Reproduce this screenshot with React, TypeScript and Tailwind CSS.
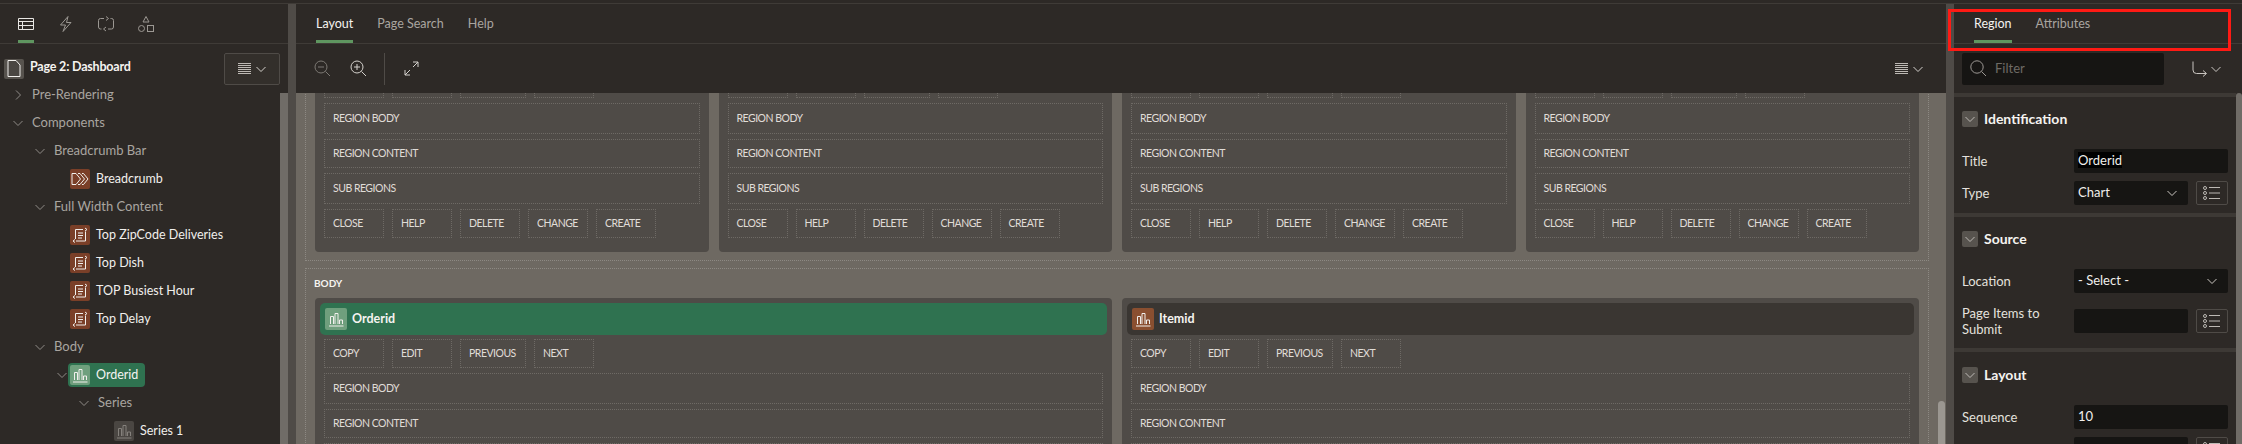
import React from "react";

const font = { fontFamily: '"Lato", "Noto Sans", sans-serif' };

function Chevron({ right = false, className = "" }: { right?: boolean; className?: string }) {
  return (
    <svg width="10" height="10" viewBox="0 0 10 10" fill="none" stroke="currentColor" strokeWidth="1" className={className}>
      {right ? <path d="M3 0.5 L7.5 5 L3 9.5" /> : <path d="M0.5 3 L5 7.5 L9.5 3" />}
    </svg>
  );
}

function MenuLines() {
  return (
    <svg width="13" height="12" viewBox="0 0 13 12" stroke="#bdb9b4" strokeWidth="1">
      <path d="M0 0.5H13M0 2.5H13M0 4.5H13M0 6.5H13M0 8.5H13M0 10.5H13" />
    </svg>
  );
}

function TabsIcons() {
  return (
    <div className="flex items-center gap-[24px] pl-[18px] pt-[12px] text-[#9c9893]">
      <div className="flex flex-col items-center">
        <svg width="16" height="16" viewBox="0 0 16 16" fill="none" stroke="#e8e6e3" strokeWidth="1">
          <path d="M0.5 2.5H15.5V13.5H0.5ZM0.5 5.5H15.5M0.5 9.5H15.5M4.5 5.5V13.5" />
        </svg>
        <div className="mt-[8px] h-[3px] w-[16px] bg-[#5f9660]" />
      </div>
      <div className="flex flex-col items-center">
        <svg width="16" height="16" viewBox="0 0 16 16" fill="none" stroke="currentColor" strokeWidth="1">
          <path d="M10 0.5 L2.5 9 H7.5 L5 15.5 L13 6.5 H8.5 Z" />
        </svg>
        <div className="mt-[8px] h-[3px]" />
      </div>
      <div className="flex flex-col items-center">
        <svg width="16" height="16" viewBox="0 0 16 16" fill="none" stroke="currentColor" strokeWidth="1">
          <path d="M6 2.5H2.5Q0.5 2.5 0.5 4.5V11Q0.5 13 2.5 13H3.5M10 13H13.5Q15.5 13 15.5 11V4.5Q15.5 2.5 13.5 2.5H12.5M8 0.5L10.5 2.5L8 4.5M8 11L5.5 13L8 15" />
        </svg>
        <div className="mt-[8px] h-[3px]" />
      </div>
      <div className="flex flex-col items-center">
        <svg width="16" height="16" viewBox="0 0 16 16" fill="none" stroke="currentColor" strokeWidth="1">
          <path d="M8 0.5L11 6H5Z" />
          <circle cx="3.5" cy="12.5" r="3" />
          <rect x="9.5" y="9.5" width="6" height="6" />
        </svg>
        <div className="mt-[8px] h-[3px]" />
      </div>
    </div>
  );
}

function BarsGlyph({ color = "#f1efec", size = 16 }: { color?: string; size?: number }) {
  return (
    <svg width={size} height={size} viewBox="0 0 16 16" fill="none" stroke={color} strokeWidth="1">
      <path d="M2.5 13V5.5H5.5V13M7 13V2.5H10V13M11.5 13V9H14.5V13M1 15H15.5" />
    </svg>
  );
}

function RegionGlyph() {
  return (
    <svg width="16" height="16" viewBox="0 0 16 16" fill="none" stroke="#f1efec" strokeWidth="1">
      <path d="M3.5 12V2.5H11M13 1L15 2.5L13 4M13.5 4.5V14H4M3 12.5L1 14L3 15.5M6 6H11M6 8.5H11M6 11H10" />
    </svg>
  );
}

function BreadcrumbGlyph() {
  return (
    <svg width="18" height="14" viewBox="0 0 18 14" fill="none" stroke="#f1efec" strokeWidth="1">
      <path d="M1 1.5H5L9.5 7L5 12.5H1ZM7 1.5H9L13.5 7L9 12.5H7M11 1.5H12.5L17 7L12.5 12.5H11" />
    </svg>
  );
}

function TreeRow({
  pl,
  chevron,
  children,
}: {
  pl: number;
  chevron?: "down" | "right";
  children: React.ReactNode;
}) {
  return (
    <div className="flex h-[28px] items-center" style={{ paddingLeft: pl }}>
      <div className="flex w-[22px] shrink-0 items-center pl-[3px] text-[#8f8b86]">
        {chevron && <Chevron right={chevron === "right"} />}
      </div>
      {children}
    </div>
  );
}

function Group({ pl, label, right = false }: { pl: number; label: string; right?: boolean }) {
  return (
    <TreeRow pl={pl} chevron={right ? "right" : "down"}>
      <span className="text-[13px] text-[#a9a5a0]">{label}</span>
    </TreeRow>
  );
}

function Leaf({
  pl,
  label,
  icon,
  bg = "bg-[#7a3f28]",
}: {
  pl: number;
  label: string;
  icon: React.ReactNode;
  bg?: string;
}) {
  return (
    <TreeRow pl={pl}>
      <span className={`flex h-[20px] w-[20px] items-center justify-center rounded-[2px] ${bg}`}>{icon}</span>
      <span className="ml-[6px] text-[12.5px] text-[#f1efec]">{label}</span>
    </TreeRow>
  );
}

function LeftPanel() {
  return (
    <div className="flex h-full w-[288px] shrink-0 flex-col bg-[#2d2926]">
      <div className="h-[40px] shrink-0 border-b border-[#3f3b37]">
        <TabsIcons />
      </div>
      <div className="flex min-h-0 flex-1">
        <div className="min-w-0 flex-1 overflow-hidden">
          <div className="flex h-[49px] items-center pl-[4px] pr-0">
            <span className="flex h-[20px] w-[20px] items-center justify-center rounded-[2px] bg-[#57534e]">
              <svg width="14" height="17" viewBox="0 0 14 17" fill="#4a4642" stroke="#f1efec" strokeWidth="1">
                <path d="M1 0.5H9L13 5V16.5H1Z" />
              </svg>
            </span>
            <span className="ml-[6px] flex-1 pb-[2px] text-[12.5px] font-bold tracking-[-0.2px] text-[#f5f3f0]">Page 2: Dashboard</span>
            <div className="flex h-[32px] w-[56px] items-center justify-center gap-[5px] rounded-[2px] border border-[#4f4b47] bg-[#332f2b] text-[#d4d1cc]">
              <MenuLines />
              <Chevron />
            </div>
          </div>
          <div className="-mt-[12px]">
            <Group pl={10} label="Pre-Rendering" right />
          </div>
          <Group pl={10} label="Components" />
          <Group pl={32} label="Breadcrumb Bar" />
          <Leaf pl={48} label="Breadcrumb" icon={<BreadcrumbGlyph />} />
          <Group pl={32} label="Full Width Content" />
          <Leaf pl={48} label="Top ZipCode Deliveries" icon={<RegionGlyph />} />
          <Leaf pl={48} label="Top Dish" icon={<RegionGlyph />} />
          <Leaf pl={48} label="TOP Busiest Hour" icon={<RegionGlyph />} />
          <Leaf pl={48} label="Top Delay" icon={<RegionGlyph />} />
          <Group pl={32} label="Body" />
          <TreeRow pl={54} chevron="down">
            <span className="-ml-[8px] flex h-[24px] w-[77px] items-center rounded-[4px] bg-[#2f7250] pl-[2px]">
              <span className="flex h-[20px] w-[20px] items-center justify-center rounded-[2px] bg-[#6f9f7d]">
                <BarsGlyph />
              </span>
              <span className="ml-[6px] text-[12.5px] text-[#f5f3f0]">Orderid</span>
            </span>
          </TreeRow>
          <Group pl={76} label="Series" />
          <Leaf pl={92} label="Series 1" icon={<BarsGlyph color="#85817c" />} bg="bg-[#4a4642]" />
        </div>
        <div className="mt-[49px] w-[8px] shrink-0 bg-[#706c67]" />
      </div>
    </div>
  );
}

function Splitter() {
  return <div className="h-full w-[8px] shrink-0 bg-[#4f4b47]" />;
}

function Slot({ label, wide = false }: { label?: string; wide?: boolean }) {
  return (
    <div
      className={`flex h-[29px] items-center border border-dotted border-[#6e6a65] px-[8px] text-[10.5px] tracking-[-0.5px] text-[#e0ddd8] ${
        wide ? "w-[66px]" : "w-[60px]"
      }`}
    >
      {label}
    </div>
  );
}

function ScrolledOffRow() {
  return (
    <div className="flex gap-[8px]">
      <Slot />
      <Slot />
      <Slot wide />
      <Slot />
    </div>
  );
}

function TopRow() {
  return (
    <div className="flex gap-[8px]">
      <Slot label="COPY" />
      <Slot label="EDIT" />
      <Slot label="PREVIOUS" wide />
      <Slot label="NEXT" />
    </div>
  );
}

function BottomRow() {
  return (
    <div className="flex gap-[8px]">
      {["CLOSE", "HELP", "DELETE", "CHANGE", "CREATE"].map((t) => (
        <Slot key={t} label={t} />
      ))}
    </div>
  );
}

function Wide({ label, h }: { label?: string; h: string }) {
  return (
    <div className={`flex items-center border border-dotted border-[#6e6a65] px-[8px] text-[10.5px] tracking-[-0.5px] text-[#e0ddd8] ${h}`}>
      {label}
    </div>
  );
}

function TopCard() {
  return (
    <div className="flex flex-col gap-[5px] rounded-[4px] bg-[#4f4b47] px-[9px] pb-[14px] pt-[15px]">
      <ScrolledOffRow />
      <Wide label="REGION BODY" h="h-[31px]" />
      <Wide label="REGION CONTENT" h="h-[29px]" />
      <Wide label="SUB REGIONS" h="h-[31px]" />
      <BottomRow />
    </div>
  );
}

function BodyCard({ title, active = false }: { title: string; active?: boolean }) {
  return (
    <div className="rounded-[4px] bg-[#4f4b47] px-[5px] pt-[5px]">
      <div className={`flex h-[32px] items-center rounded-[5px] pl-[5px] ${active ? "bg-[#2f7250]" : "bg-[#3a3632]"}`}>
        <span className={`flex h-[22px] w-[22px] items-center justify-center rounded-[2px] ${active ? "bg-[#6f9f7d]" : "bg-[#8a4f30]"}`}>
          <BarsGlyph />
        </span>
        <span className="ml-[5px] text-[12.5px] font-bold text-[#f5f3f0]">{title}</span>
      </div>
      <div className="flex flex-col gap-[5px] px-[4px] pt-[4px]">
        <TopRow />
        <Wide label="REGION BODY" h="h-[31px]" />
        <Wide label="REGION CONTENT" h="h-[29px]" />
        <Wide h="h-[31px]" />
      </div>
    </div>
  );
}

function Canvas() {
  return (
    <div className="flex min-h-0 flex-1 overflow-hidden bg-[#6e6962]">
      <div className="min-w-0 flex-1 px-[9px]">
        <div className="-mt-[40px] border border-dotted border-[#8d8983] px-[9px] pb-[8px]">
          <div className="grid grid-cols-4 gap-[10px]">
            <TopCard />
            <TopCard />
            <TopCard />
            <TopCard />
          </div>
        </div>
        <div className="mt-[7px] border border-dotted border-[#8d8983] px-[9px]">
          <div className="-ml-[1px] flex h-[29px] items-center text-[10px] font-bold text-[#f5f3f0]">BODY</div>
          <div className="grid grid-cols-2 gap-[10px]">
            <BodyCard title="Orderid" active />
            <BodyCard title="Itemid" />
          </div>
        </div>
      </div>
      <div className="flex w-[8px] shrink-0 flex-col justify-end pr-px">
        <div className="h-[43px] rounded-t-[4px] bg-[#9b9791]" />
      </div>
    </div>
  );
}

function CenterPanel() {
  return (
    <div className="flex h-full min-w-0 flex-1 flex-col bg-[#2d2926]">
      <div className="flex h-[40px] shrink-0 items-end gap-[24px] border-b border-[#3f3b37] pl-[20px] text-[12.5px]">
        <div className="flex h-[39px] flex-col border-b-[3px] border-[#5f9660] pt-[11px] text-[#f5f3f0]">Layout</div>
        <div className="flex h-[39px] flex-col pt-[11px] text-[#a9a5a0]">Page Search</div>
        <div className="flex h-[39px] flex-col pt-[11px] text-[#a9a5a0]">Help</div>
      </div>
      <div className="flex h-[49px] shrink-0 items-center pl-[18px] pr-[23px]">
        <svg width="17" height="17" viewBox="0 0 17 17" fill="none" stroke="#7d7974" strokeWidth="1">
          <circle cx="7" cy="7" r="6" />
          <path d="M4 7H10M11.5 11.5L16 16" />
        </svg>
        <svg width="17" height="17" viewBox="0 0 17 17" fill="none" stroke="#d4d1cc" strokeWidth="1" className="ml-[19px]">
          <circle cx="7" cy="7" r="6" />
          <path d="M4 7H10M7 4V10M11.5 11.5L16 16" />
        </svg>
        <div className="ml-[17px] h-[32px] w-px bg-[#4f4b47]" />
        <svg width="15" height="15" viewBox="0 0 15 15" fill="none" stroke="#d4d1cc" strokeWidth="1" className="ml-[19px]">
          <path d="M1 14L6 9M9 6L14 1M9 1H14V6M1 9V14H6" />
        </svg>
        <div className="ml-auto flex items-center gap-[5px] text-[#d4d1cc]">
          <MenuLines />
          <Chevron />
        </div>
      </div>
      <Canvas />
    </div>
  );
}

function ListButton() {
  return (
    <div className="flex h-[24px] w-[32px] shrink-0 items-center justify-center rounded-[2px] border border-[#4f4b47]">
      <svg width="18" height="14" viewBox="0 0 18 14" fill="none" stroke="#bdb9b4" strokeWidth="1">
        <circle cx="2" cy="2" r="1.5" />
        <circle cx="2" cy="7" r="1.5" />
        <circle cx="2" cy="12" r="1.5" />
        <path d="M6 1.5H17M6 7H17M6 12.5H17" />
      </svg>
    </div>
  );
}

function Field({ children, select = false }: { children?: React.ReactNode; select?: boolean }) {
  return (
    <div className="flex h-[24px] min-w-0 flex-1 items-center rounded-[2px] bg-[#161513] pl-[4px] pr-[11px] text-[13px] text-[#f1efec]">
      <span className="flex-1">{children}</span>
      {select && <Chevron className="text-[#c9c5c0]" />}
    </div>
  );
}

function SectionHead({ title }: { title: string }) {
  return (
    <div className="flex h-[16px] items-center">
      <span className="flex h-[16px] w-[16px] items-center justify-center rounded-[2px] bg-[#57534e] text-[#bdb9b4]">
        <Chevron />
      </span>
      <span className="ml-[6px] pb-[1px] text-[14px] font-bold text-[#f5f3f0]">{title}</span>
    </div>
  );
}

function PropRow({ label, children, className = "" }: { label?: React.ReactNode; children: React.ReactNode; className?: string }) {
  return (
    <div className={`flex items-center ${className}`}>
      <div className="w-[112px] shrink-0 text-[13px] leading-[16px] text-[#e4e1dd]">{label}</div>
      <div className="flex min-w-0 flex-1 items-center gap-[8px]">{children}</div>
    </div>
  );
}

function RightPanel() {
  return (
    <div className="relative flex h-full w-[288px] shrink-0 flex-col bg-[#2d2926]">
      <div className="flex h-[40px] shrink-0 items-end gap-[24px] border-b border-[#3f3b37] pl-[20px] text-[12.5px]">
        <div className="flex h-[39px] flex-col border-b-[3px] border-[#5f9660] pt-[11px] text-[#f5f3f0]">Region</div>
        <div className="flex h-[39px] flex-col pt-[11px] text-[#a9a5a0]">Attributes</div>
      </div>
      <div className="flex h-[49px] shrink-0 items-center pl-[8px]">
        <div className="flex h-[32px] w-[202px] items-center rounded-[2px] bg-[#161513] pl-[8px] text-[13px] text-[#6e6a65]">
          <svg width="17" height="17" viewBox="0 0 17 17" fill="none" stroke="#9c9893" strokeWidth="1">
            <circle cx="7" cy="7" r="6.2" />
            <path d="M11.5 11.5L16 16" />
          </svg>
          <span className="ml-[8px]">Filter</span>
        </div>
        <svg width="16" height="16" viewBox="0 0 16 16" fill="none" stroke="#c9c5c0" strokeWidth="1" className="ml-[28px]">
          <path d="M1 0.5V9Q1 12.5 4.5 12.5H14M11 9.5L14.5 12.5L11 15.5" />
        </svg>
        <Chevron className="ml-[3px] text-[#c9c5c0]" />
      </div>
      <div className="flex min-h-0 flex-1 overflow-hidden">
        <div className="min-w-0 flex-1">
          <div className="h-[4px] bg-[#3d3935]" />
          <div className="h-[116px] px-[8px] pt-[14px]">
            <SectionHead title="Identification" />
            <PropRow label="Title" className="mt-[22px]">
              <Field>
                <span className="bg-[#000000]">Orderid</span>
              </Field>
            </PropRow>
            <PropRow label="Type" className="mt-[8px]">
              <Field select>Chart</Field>
              <ListButton />
            </PropRow>
          </div>
          <div className="h-[4px] bg-[#3d3935]" />
          <div className="h-[131px] px-[8px] pt-[14px]">
            <SectionHead title="Source" />
            <PropRow label="Location" className="mt-[22px]">
              <Field select>- Select -</Field>
            </PropRow>
            <PropRow label={<>Page Items to<br />Submit</>} className="mt-[12px]">
              <Field />
              <ListButton />
            </PropRow>
          </div>
          <div className="h-[4px] bg-[#3d3935]" />
          <div className="px-[8px] pt-[15px]">
            <SectionHead title="Layout" />
            <PropRow label="Sequence" className="mt-[22px]">
              <Field>10</Field>
            </PropRow>
            <PropRow className="mt-[8px]">
              <Field />
              <ListButton />
            </PropRow>
          </div>
        </div>
        <div className="w-[6px] shrink-0 rounded-t-[3px] bg-[#706c67]" />
      </div>
      <div className="absolute left-[-6px] top-[5px] h-[42px] w-[283px] border-[3px] border-[#ff1a14]" />
    </div>
  );
}

export default function App() {
  return (
    <div className="flex h-[444px] w-[2242px] flex-col overflow-hidden bg-[#2d2926]" style={font}>
      <div className="h-[4px] shrink-0 border-b border-[#3f3b37]" />
      <div className="flex min-h-0 flex-1">
        <LeftPanel />
        <Splitter />
        <CenterPanel />
        <Splitter />
        <RightPanel />
      </div>
    </div>
  );
}
